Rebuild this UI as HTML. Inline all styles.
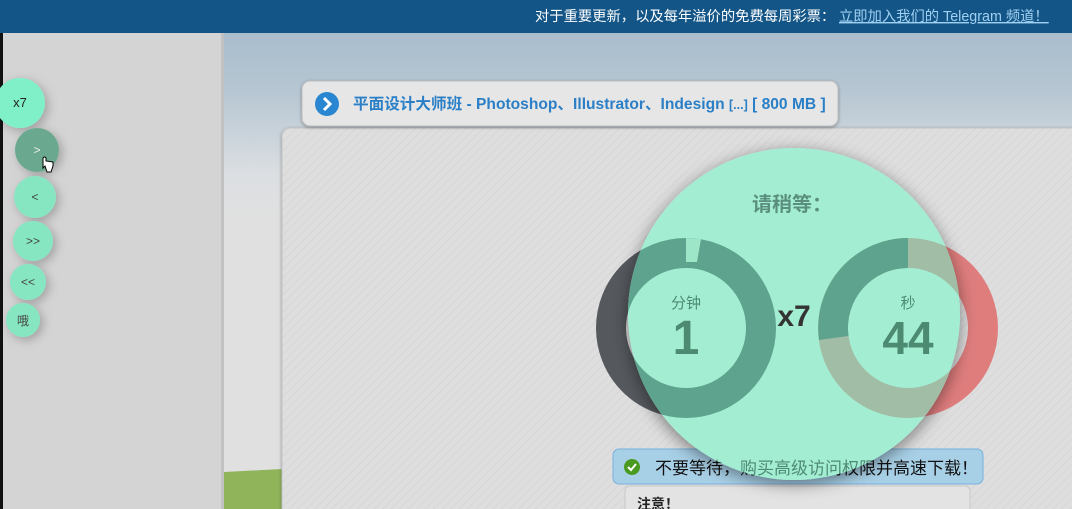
<!DOCTYPE html>
<html><head><meta charset="utf-8"><style>
html,body{margin:0;padding:0;width:1072px;height:509px;overflow:hidden;background:#d4d4d4}
svg{display:block}
text{font-family:"Liberation Sans","Noto Sans CJK SC",sans-serif}
</style></head><body>
<svg width="1072" height="509" viewBox="0 0 1072 509" xmlns="http://www.w3.org/2000/svg">
<defs>
<linearGradient id="sky" x1="0" y1="0" x2="0" y2="1">
<stop offset="0" stop-color="#a9bdcd"/><stop offset="0.12" stop-color="#b6c6d2"/><stop offset="0.3" stop-color="#dcdfe2"/><stop offset="0.4" stop-color="#e0e0e0"/><stop offset="1" stop-color="#e0e0e0"/>
</linearGradient>
<pattern id="str" width="6" height="6" patternUnits="userSpaceOnUse" patternTransform="rotate(45)">
<rect width="6" height="6" fill="#dedede"/><rect width="1" height="6" fill="#d6d6d6"/>
</pattern>
<filter id="sh" x="-30%" y="-30%" width="160%" height="160%"><feDropShadow dx="0" dy="4" stdDeviation="8" flood-color="#000" flood-opacity="0.45"/></filter>
<filter id="sh2" x="-50%" y="-50%" width="200%" height="200%"><feDropShadow dx="3" dy="3" stdDeviation="5" flood-color="#000" flood-opacity="0.25"/></filter>
<filter id="sh3"><feDropShadow dx="0" dy="1" stdDeviation="1.5" flood-color="#000" flood-opacity="0.35"/></filter>
<clipPath id="bc"><circle cx="794" cy="314" r="166"/></clipPath>
</defs>
<rect width="1072" height="509" fill="#d4d4d4"/>
<rect x="0" y="0" width="3" height="509" fill="#111"/>
<rect x="223" y="33" width="849" height="476" fill="url(#sky)"/>
<rect x="221" y="33" width="3" height="476" fill="#c2c2c2"/>
<path d="M224 472 L282 469 L282 509 L224 509Z" fill="#8fb45a"/>
<rect x="282" y="128" width="800" height="400" rx="8" fill="url(#str)" stroke="#c4c4c4" filter="url(#sh3)"/>
<rect x="0" y="0" width="1072" height="33" fill="#135587"/>
<text x="535" y="21" font-size="14.3" fill="#fff">对于重要更新，以及每年溢价的免费每周彩票：</text>
<text x="839" y="21" font-size="14.3" fill="#9fd0f2" text-decoration="underline">立即加入我们的 Telegram 频道！</text>
<rect x="302" y="81" width="536" height="45" rx="8" fill="#e6e6e6" stroke="#bdbdbd" filter="url(#sh3)"/>
<circle cx="327" cy="104" r="12" fill="#2a86d0"/>
<path d="M324 98 L330 104 L324 110" stroke="#fff" stroke-width="3" fill="none"/>
<text x="353" y="109" font-size="15.6" font-weight="bold" fill="#2a7fc6">平面设计大师班 - Photoshop、Illustrator、Indesign <tspan font-size="12.5">[...]</tspan> [ 800 MB ]</text>
<circle cx="686" cy="328" r="75" fill="none" stroke="#55595e" stroke-width="30"/>
<circle cx="908" cy="328" r="75" fill="none" stroke="#df7d7d" stroke-width="30"/>
<rect x="613" y="449" width="370" height="35" rx="6" fill="#a7cfe6" stroke="#78b0dc"/>
<circle cx="632" cy="467" r="8" fill="#4a9a22"/>
<path d="M628 467 L631 470 L636 464" stroke="#fff" stroke-width="2" fill="none"/>
<text x="655" y="474" font-size="17" fill="#111">不要等待，购买高级访问权限并高速下载！</text>
<rect x="625" y="486" width="345" height="40" rx="5" fill="#e3e3e3" stroke="#c8c8c8"/>
<text x="637" y="509" font-size="14" font-weight="bold" fill="#222">注意！</text>
<circle cx="794" cy="314" r="166" fill="#a3eed3" filter="url(#sh)"/>
<g clip-path="url(#bc)">
<circle cx="686" cy="328" r="75" fill="none" stroke="#5ea38d" stroke-width="30"/>
<path d="M686 238 L701 239 L697 262 L686 262Z" fill="#9ee6c8"/>
<circle cx="908" cy="328" r="75" fill="none" stroke="#a2bda5" stroke-width="30"/>
<path d="M908 238 L908 268 A60 60 0 0 0 848.5 336 L819 340 A90 90 0 0 1 908 238Z" fill="#5ea38d"/>
<text x="655" y="474" font-size="17" fill="#4f8a76">不要等待，购买高级访问权限并高速下载！</text>
</g>
<text x="792" y="211" font-size="20" font-weight="bold" fill="#5b8f7d" text-anchor="middle">请稍等：</text>
<text x="686" y="308" font-size="15" fill="#4d8a74" text-anchor="middle">分钟</text>
<text x="686" y="354" font-size="48" font-weight="bold" fill="#4d8a72" text-anchor="middle">1</text>
<text x="794" y="326" font-size="30" font-weight="bold" fill="#333" text-anchor="middle">x7</text>
<text x="908" y="308" font-size="15" fill="#4d8a74" text-anchor="middle">秒</text>
<text x="908" y="354" font-size="46" font-weight="bold" fill="#4d8a72" text-anchor="middle">44</text>
<g filter="url(#sh2)">
<circle cx="20" cy="103" r="25" fill="#80f0c8"/>
<circle cx="37" cy="150" r="22" fill="#6ba88f"/>
<circle cx="35" cy="197" r="21" fill="#86e6c2"/>
<circle cx="33" cy="241" r="20" fill="#86e6c2"/>
<circle cx="28" cy="282" r="18" fill="#86e6c2"/>
<circle cx="23" cy="320" r="17" fill="#86e6c2"/>
</g>
<text x="20" y="107" font-size="13" fill="#222" text-anchor="middle">x7</text>
<text x="37" y="154" font-size="12" fill="#eee" text-anchor="middle">&gt;</text>
<text x="35" y="201" font-size="12" fill="#444" text-anchor="middle">&lt;</text>
<text x="33" y="245" font-size="12" fill="#444" text-anchor="middle">&gt;&gt;</text>
<text x="28" y="286" font-size="12" fill="#444" text-anchor="middle">&lt;&lt;</text>
<text x="23" y="325" font-size="12" fill="#444" text-anchor="middle">哦</text>
<path d="M43 158 L43 168 L45 166 L47 172 L51 172 L53 166 L53 162 L46 161 L46 158 Q44.5 156 43 158Z" fill="#fff" stroke="#000" stroke-width="1"/>
</svg>
</body></html>
